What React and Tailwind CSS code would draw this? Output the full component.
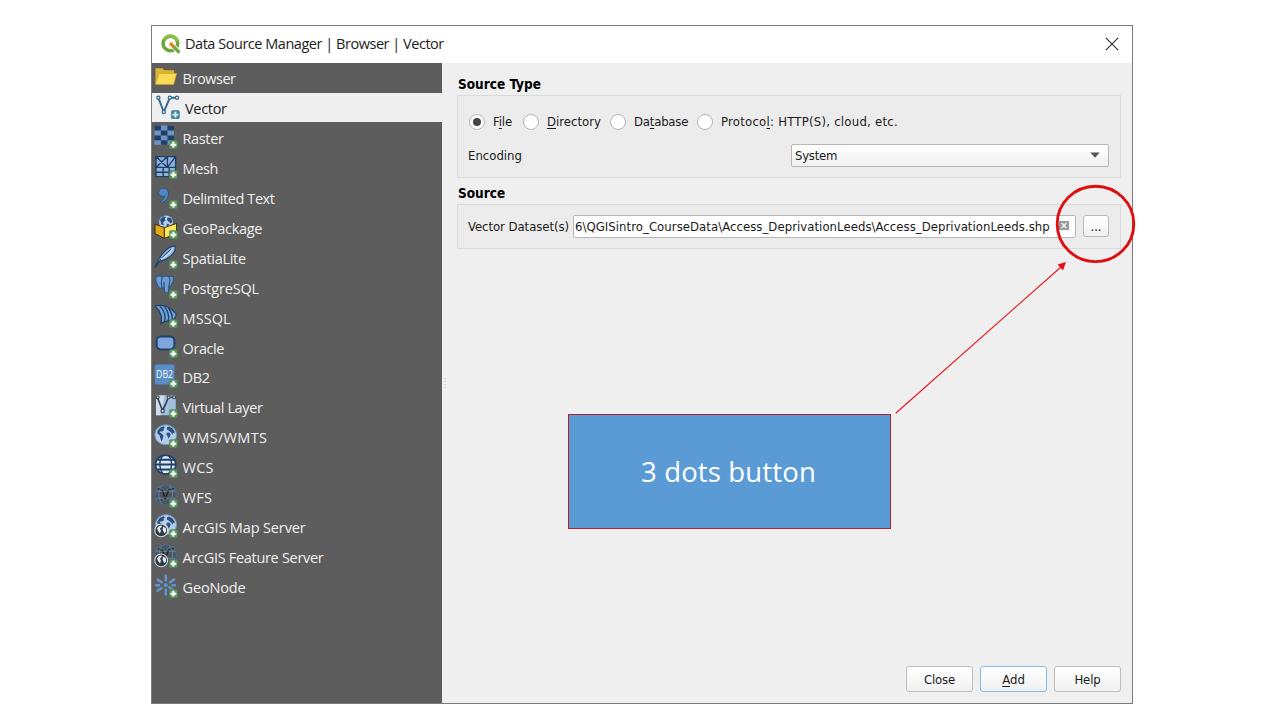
import React from "react";

const NAVY = "#1f3f66";

function Plus({ teal }) {
  return (
    <g>
      <rect x="15.4" y="15.6" width="8" height="8.2" rx="1.4" fill={teal ? "#3c8796" : "#5b9a5f"} stroke={teal ? "#2f6f86" : "#4b8550"} strokeWidth="0.5" />
      <path d="M19.4 16.8v5.8M16.5 19.7h5.8" stroke={teal ? "#cdeaf0" : "#ffffff"} strokeWidth="2.1" />
    </g>
  );
}

function Icon({ children, plus = true, teal = false }) {
  return (
    <svg viewBox="0 0 24 24" className="mb-[1.2px] h-6 w-6 shrink-0" fill="none">
      {children}
      {plus && <Plus teal={teal} />}
    </svg>
  );
}

function Continents({ color = NAVY }) {
  return (
    <path
      d="M3.4 7 6 3.8 9.6 2.2 11 3.4 9.4 4.8 10.2 6 8 7.6 6.4 7.2 6 8.6 8.4 10.2 9.6 12 8.6 15 7.6 17.6 6.4 14.6 5.4 11 3.4 9.4ZM12.8 3.4 15 2.4 18 4 20.4 7 20.8 9.6 19.2 8.8 18.4 10.8 17.2 8.4 16 7.8 14.8 6.6 13 5.8ZM12.8 8.8 15.2 8.6 16.8 10.6 15.8 12.6 14.6 14.8 13.6 12.2 12.4 10.8Z"
      fill={color}
    />
  );
}

function WireGlobe() {
  return (
    <g>
      <ellipse cx="11.7" cy="10.8" rx="10.8" ry="10" fill="#4f5459" stroke="#48678a" strokeWidth="1.3" />
      <path d="M2 7.400h19.400M2 14.300h19.400M8 1.400C3.800 6.600 3.800 14.800 8 20M15.400 1.400c4.200 5.200 4.200 13.400 0 18.600" stroke="#5c83aa" strokeWidth="1" />
      <path d="M4.600 4.800 8.300 6.400 11.200 14.600 15 5.400 19 4.600" stroke="#1e252c" strokeWidth="1.500" />
      <g fill="#242d36" stroke="#8aa3bb" strokeWidth="0.500">
        <circle cx="4.600" cy="4.800" r="1.500" />
        <circle cx="8.300" cy="6.400" r="1.500" />
        <circle cx="11.200" cy="14.600" r="1.600" />
        <circle cx="15" cy="5.400" r="1.500" />
        <circle cx="19" cy="4.600" r="1.500" />
      </g>
    </g>
  );
}

function ServerBadge() {
  return (
    <g>
      <circle cx="7.2" cy="16.4" r="6.4" fill="#2b3a49" stroke="#d5d9dc" strokeWidth="1.1" />
      <path d="M3 14.200 5.400 11.800 8 11.600 7.400 13.600 5.800 14.600 7 16.600 6 19.400 4.200 17.200ZM9.200 12.600 11.800 14 12.200 17 10.600 19.600 9.400 17.400 8.600 15.400Z" fill="#e3e8eb" />
    </g>
  );
}

const icons = {
  browser: (
    <Icon plus={false}>
      <path d="M1.400 3.200h7.200l1.600 2h9.800v13.600H1.400Z" fill="#dcb431" />
      <path d="M4.800 8.400h17.800l-3 11H1.600Z" fill="#fadb55" stroke="#cfa62c" strokeWidth="0.700" />
    </Icon>
  ),
  vector: (
    <Icon teal>
      <path d="M2.400 2.800 7.800 17 13.800 2.800H21" stroke="#33658f" strokeWidth="1.900" />
      <g fill="#e4edf4" stroke="#33658f" strokeWidth="1.200">
        <circle cx="2.400" cy="2.800" r="1.600" />
        <circle cx="7.800" cy="17" r="1.600" />
        <circle cx="13.800" cy="2.800" r="1.600" />
        <circle cx="21" cy="2.800" r="1.600" />
      </g>
    </Icon>
  ),
  raster: (
    <Icon>
      <path d="M.4.400H20v19.400H.400Z" fill="#6c93c4" />
      <path d="M.4.400h6.500v5H.400ZM13.400.400H20v5h-6.600ZM6.900 5.400h6.500v5.200H6.900ZM.4 10.600h6.500v4.700H.400ZM13.400 10.600H20v4.700h-6.600ZM6.900 15.300h6.500v4.500H6.900Z" fill="#223e62" />
    </Icon>
  ),
  mesh: (
    <Icon>
      <path d="M2 1.600h19.600v20H2Z" fill="#8fb2dc" />
      <path d="M2 1.600h19.600v20H2ZM2 12.400h19.600M2 17.200h13.200M13.400 1.600v10.800M9.200 12.400v9.200M15.200 12.400v9.200M2 1.600l11.400 10.800M13.400 1.600 2 12.400M13.400 12.400 21.600 1.600" stroke={NAVY} strokeWidth="1.400" />
    </Icon>
  ),
  comma: (
    <Icon>
      <path d="M8.800 3.200c3.400-.4 5.800 2 5.700 5.600-.1 4.400-3 8-7.300 9.200l-.6-1.700c2.500-1.200 3.900-3 4-5.100-3 .7-6-1-6-3.900 0-2.300 1.800-3.900 4.200-4.100Z" fill="#4f86bf" stroke="#29507d" strokeWidth="1" />
    </Icon>
  ),
  geopackage: (
    <Icon>
      <circle cx="12" cy="7.400" r="7.200" fill="#b9d0ea" stroke="#3b5f8c" strokeWidth="0.600" />
      <path d="M6 4.600 9.600 1.200 12 2 10.600 4 11.600 5.600 9 7.600 10 10.600 7.400 9.600ZM13.600 2.200 17 3.200 18.400 6.400 16.600 8.600 14.600 6.400 13 5ZM12.600 8.600 15.400 9.600 13 12Z" fill="#27507f" />
      <path d="M1 9.200 10.400 12.600V23.400L1 18.600Z" fill="#e3a91c" stroke="#3b2e07" strokeWidth="1" />
      <path d="M10.400 12.600 22.600 8.400V18.600L10.400 23.400Z" fill="#fbe65c" stroke="#3b2e07" strokeWidth="1" />
    </Icon>
  ),
  feather: (
    <Icon>
      <path d="M1 22.400C3 17 6 11 10.600 6.400 14.200 2.800 18.200.8 21.200 1.200 22 5 20.200 8 16.400 11.200 13 14 8.600 16 5.400 16.400Z" fill="#8db4e2" stroke={NAVY} strokeWidth="1.100" />
      <path d="M1 22.400C5 15.600 10 9.600 17 4.400" stroke={NAVY} strokeWidth="1" />
      <path d="M7 14.400C11 12.400 15 9.400 19 3.600" stroke="#c9dcf2" strokeWidth="1.500" />
    </Icon>
  ),
  elephant: (
    <Icon>
      <path d="M2 2.200C4 .6 7 .8 9 1.600c2.400-1 4.600-.8 6 0 2.400-.8 4.400-.2 4.600 1.800.2 3-1.600 6.200-3 7.800-.6.600-1.600.2-1.800-.4l-.2 5.600c-.2 2-3.600 2.200-4 .2l-.4-4.200c-1 1-2 .6-2.600 0-.6 1.400-2 1.400-2.800 0C3 9.400 1 4.600 2 2.200Z" fill="#6f9bd1" stroke="#2a5585" strokeWidth="1.100" />
      <path d="M8.400 2C7 4.600 7.400 8.600 7.600 12M15 1.800c1.600 2 1 5.600-.2 9M10.200 12.400c-.4-2 .2-3.600-.4-5.400" stroke="#2a5585" strokeWidth="1.200" />
    </Icon>
  ),
  mssql: (
    <Icon>
      <path d="M1.200 2C6 .6 14 1 22 9.600c.6 2-1 4.600-3 6.400-4 .4-8.400 1.200-12.400 3.400C9 14.600 6.600 7 1.200 2Z" fill="#6f9fd6" stroke={NAVY} strokeWidth="1.100" />
      <path d="M5.600 1.600C10.600 7 12 13 10.400 18M10 2.200c4 4.800 5.400 9.800 4.200 14.400M14.400 4c3 3.800 4.200 7.800 3.600 11.800" stroke={NAVY} strokeWidth="1.300" />
    </Icon>
  ),
  oracle: (
    <Icon>
      <rect x="2.600" y="2.400" width="17.800" height="13" rx="4.400" fill="#7fa6dc" stroke={NAVY} strokeWidth="2" />
    </Icon>
  ),
  db2: (
    <Icon>
      <rect x="0.800" y="0.400" width="19.600" height="20" rx="1.800" fill="#5b8ec4" stroke="#477bb0" strokeWidth="0.600" />
      <text x="10.600" y="13.800" textAnchor="middle" fontFamily="Open Sans, sans-serif" fontSize="11.500" fontWeight="500" textLength="17" lengthAdjust="spacingAndGlyphs" fill="#f2f7fc">DB2</text>
    </Icon>
  ),
  virtual: (
    <Icon>
      <path d="M2 1.400h19.800v19.800H2Z" fill="#a3bfdf" />
      <path d="M2 1.400h8.600l-4 19.800H2Z" fill="#cfdeee" />
      <path d="M3.400 3.200 8.600 16.800 14.600 3.200H20.600" stroke="#353f49" strokeWidth="1.600" />
      <g fill="#cddbe9" stroke="#353f49" strokeWidth="1.100">
        <circle cx="3.600" cy="3.200" r="1.500" />
        <circle cx="8.600" cy="17" r="1.700" />
        <circle cx="14.600" cy="3.200" r="1.500" />
        <circle cx="20.200" cy="3.200" r="1.500" />
      </g>
    </Icon>
  ),
  wms: (
    <Icon>
      <ellipse cx="11.700" cy="10.800" rx="10.900" ry="10" fill="#b4cdea" stroke="#6d93bf" strokeWidth="1" />
      <Continents color="#2a5280" />
    </Icon>
  ),
  wcs: (
    <Icon>
      <ellipse cx="11.700" cy="10.600" rx="10.200" ry="9.500" fill="#dbe7f3" stroke={NAVY} strokeWidth="1.600" />
      <path d="M3.400 5.800h16.600M1.600 10.600h20.200M3.400 15.400h16.600" stroke={NAVY} strokeWidth="2" />
      <path d="M8.600 1.400C5 7 5 14 8.600 19.600M14.800 1.400c3.600 5.600 3.600 12.600 0 18.200" stroke={NAVY} strokeWidth="1.400" />
    </Icon>
  ),
  wfs: (
    <Icon>
      <WireGlobe />
    </Icon>
  ),
  arcmap: (
    <Icon>
      <ellipse cx="12" cy="10.600" rx="10.600" ry="10" fill="#b4cdea" stroke="#6d93bf" strokeWidth="1" />
      <Continents color="#2a5280" />
      <ServerBadge />
    </Icon>
  ),
  arcfeature: (
    <Icon>
      <WireGlobe />
      <ServerBadge />
    </Icon>
  ),
  geonode: (
    <Icon>
      <path d="M11.800 1.800v4.800M11.800 15.600v4.800M3.600 5.600l4 2.600M20 5.600l-4 2.600M3.600 16.600l4-2.600M2.200 11.200h3M18.600 11.200h2.400M15.400 13.400l2.400 1.600" stroke="#5f96cf" strokeWidth="2.500" strokeLinecap="round" />
      <circle cx="11.800" cy="11.200" r="1.900" fill="#5f96cf" />
    </Icon>
  ),
};

const sources = [
  { label: "Browser", icon: "browser", track: "tracking-[-0.45px]" },
  { label: "Vector", icon: "vector", track: "tracking-[-0.3px]", selected: true },
  { label: "Raster", icon: "raster", track: "tracking-[-0.35px]" },
  { label: "Mesh", icon: "mesh", track: "tracking-[-0.4px]" },
  { label: "Delimited Text", icon: "comma", track: "tracking-[-0.42px]" },
  { label: "GeoPackage", icon: "geopackage", track: "tracking-[-0.33px]" },
  { label: "SpatiaLite", icon: "feather", track: "tracking-[-0.3px]" },
  { label: "PostgreSQL", icon: "elephant", track: "tracking-[-0.18px]" },
  { label: "MSSQL", icon: "mssql", track: "tracking-[0.1px]" },
  { label: "Oracle", icon: "oracle", track: "tracking-[-0.4px]" },
  { label: "DB2", icon: "db2", track: "tracking-[-0.3px]" },
  { label: "Virtual Layer", icon: "virtual", track: "tracking-[-0.36px]" },
  { label: "WMS/WMTS", icon: "wms", track: "tracking-[0.35px]" },
  { label: "WCS", icon: "wcs", track: "tracking-[0.3px]" },
  { label: "WFS", icon: "wfs", track: "tracking-[0.3px]" },
  { label: "ArcGIS Map Server", icon: "arcmap", track: "tracking-[-0.14px]" },
  { label: "ArcGIS Feature Server", icon: "arcfeature", track: "tracking-[-0.3px]" },
  { label: "GeoNode", icon: "geonode", track: "tracking-[-0.15px]" },
];

function TitleBar() {
  return (
    <header className="flex h-[36.6px] shrink-0 items-center bg-white pr-[13px] pl-[9px]">
      <svg viewBox="0 0 20 20" className="mb-[1.6px] h-5 w-5 shrink-0" fill="none">
        <circle cx="9.400" cy="9.400" r="7.300" stroke="#6da63a" strokeWidth="3.600" />
        <path d="M3 5.800A7.300 7.300 0 0 1 16.400 7.400" stroke="#8fbf45" strokeWidth="2.600" />
        <path d="m9.600 9.600 8.600 8.600" stroke="#ffffff" strokeWidth="5" />
        <path d="m11.600 11.600 6.800 7" stroke="#6da63a" strokeWidth="3.500" />
        <path d="M8.600 8.400h4l-1.200 1.200 2.600 2.600-1.800 1.800-2.600-2.600-1 1.200Z" fill="#ee7913" />
      </svg>
      <h1 className="ml-[4px] grow font-['Open_Sans',sans-serif] text-[14.5px] whitespace-nowrap tracking-[-0.47px] text-[#1c1c1c]">
        Data Source Manager | Browser | Vector
      </h1>
      <svg viewBox="0 0 14 14" className="mb-[1.6px] h-3.5 w-3.5" fill="none" stroke="#333333" strokeWidth="1.200">
        <path d="m.8.800 12.400 12.400M13.200.800.800 13.200" />
      </svg>
    </header>
  );
}

function Sidebar() {
  return (
    <nav className="w-[290px] shrink-0 bg-[#5d5d5d] font-['Open_Sans',sans-serif] text-[14.5px]">
      {sources.map((s) => (
        <div
          key={s.label}
          className={
            s.selected
              ? "flex h-[29.94px] items-center gap-[5px] bg-[#efefef] pl-[4px] text-[#222222]"
              : "flex h-[29.94px] items-center gap-[4.5px] pl-[2px] text-[#f0f0f0]"
          }
        >
          {icons[s.icon]}
          <span className={"pt-[2.8px] whitespace-nowrap " + s.track}>{s.label}</span>
        </div>
      ))}
    </nav>
  );
}

function Radio({ checked, children }) {
  return (
    <label className="flex items-center whitespace-nowrap">
      <span className="mr-[8px] flex h-4 w-4 items-center justify-center rounded-full border border-[#b4b4b4] bg-white">
        {checked && <span className="h-2 w-2 rounded-full bg-[#444444]" />}
      </span>
      {children}
    </label>
  );
}

function PushButton({ primary, children }) {
  return (
    <button
      className={
        primary
          ? "h-[26px] w-[67px] rounded-[3px] border border-[#83bbec] bg-linear-to-b from-white to-[#f1f1f1] pt-[2px]"
          : "h-[26px] w-[67px] rounded-[3px] border border-[#bdbdbd] bg-linear-to-b from-white to-[#f1f1f1] pt-[2px] tracking-[-0.15px]"
      }
    >
      {children}
    </button>
  );
}

export default function App() {
  return (
    <main className="relative h-[720px] w-[1280px] overflow-hidden bg-white pt-[25px] pl-[151px]">
      <section className="flex h-[679px] w-[982px] flex-col border border-[#7b7b7b] bg-[#efefef]">
        <TitleBar />
        <div className="flex min-h-0 grow">
          <Sidebar />
          <div className="flex w-[4px] shrink-0 flex-col items-center justify-center gap-[2px] pl-[1px]">
            <i className="h-px w-[2px] bg-[#dadada]" />
            <i className="h-px w-[2px] bg-[#dadada]" />
            <i className="h-px w-[2px] bg-[#dadada]" />
            <i className="h-px w-[2px] bg-[#dadada]" />
          </div>
          <div className="flex grow flex-col pr-[11px] pl-[11px] font-['DejaVu_Sans_Condensed',sans-serif] text-[13px] text-[#1a1a1a]">
            <h2 className="mt-[12.4px] h-[20px] pl-[1px] text-[13.5px] leading-[18px] font-bold text-black">Source Type</h2>
            <div className="h-[83px] w-[664px] border border-[#dadada] bg-[#ececec] pr-[11px] pl-[10px]">
              <div className="mt-[16px] flex h-[20px] items-center">
                <div className="-mr-[7px] w-[62px] shrink-0 pl-[1px]">
                  <Radio checked><span className="tracking-[-0.1px]">F<u className="underline-offset-2">i</u>le</span></Radio>
                </div>
                <div className="w-[87px] shrink-0">
                  <Radio><span><u className="underline-offset-2">D</u>irectory</span></Radio>
                </div>
                <div className="w-[87px] shrink-0">
                  <Radio><span className="tracking-[-0.2px]">Da<u className="underline-offset-2">t</u>abase</span></Radio>
                </div>
                <Radio><span className="tracking-[0.24px]">Protoco<u className="underline-offset-2">l</u>: HTTP(S), cloud, etc.</span></Radio>
              </div>
              <div className="mt-[12px] flex h-[23px] items-center justify-between">
                <span>Encoding</span>
                <div className="flex h-[23px] w-[318px] items-center justify-between rounded-[2px] border border-[#b5b5b5] bg-linear-to-b from-white to-[#f0f0f0] pr-[8px] pl-[3px]">
                  <span className="tracking-[-0.25px]">System</span>
                  <svg viewBox="0 0 10 6" className="h-[6px] w-[10px]">
                    <path d="M.3.500h9.400L5 5.700Z" fill="#555555" />
                  </svg>
                </div>
              </div>
            </div>
            <h2 className="mt-[6px] h-[20px] pl-[1px] text-[13.5px] leading-[18px] font-bold text-black">Source</h2>
            <div className="flex h-[45px] w-[664px] items-center border border-[#dadada] bg-[#ececec] pl-[10px]">
              <span className="w-[105px] shrink-0 whitespace-nowrap tracking-[-0.05px]">Vector Dataset(s)</span>
              <div className="flex h-[23px] w-[503px] shrink-0 items-center justify-between rounded-[2px] border border-[#b5b5b5] bg-white pr-[6px] pl-[1px]">
                <span className="whitespace-nowrap tracking-[0.05px]">6\QGISintro_CourseData\Access_DeprivationLeeds\Access_DeprivationLeeds.shp</span>
                <svg viewBox="0 0 10 9" className="mb-[2px] h-[9px] w-[10px] shrink-0">
                  <path d="M0 0h10v9H0Z" fill="#9b9b9b" />
                  <path d="m2.600 2 4.800 5M7.400 2 2.600 7" stroke="#f4f4f4" strokeWidth="1.300" />
                </svg>
              </div>
              <button className="mb-[1px] ml-[7px] flex h-[22px] w-[26px] items-center justify-center rounded-[3px] border border-[#b9b9b9] bg-linear-to-b from-white to-[#f1f1f1] pt-[1px] text-black">...</button>
            </div>
            <div className="mt-auto mb-[11px] flex w-[664px] justify-end gap-[7px]">
              <PushButton>Close</PushButton>
              <PushButton primary><u className="underline-offset-2">A</u>dd</PushButton>
              <PushButton>Help</PushButton>
            </div>
          </div>
        </div>
      </section>

      <div className="absolute top-[414px] left-[568px] flex h-[115px] w-[323px] items-center justify-center border border-[#b3202c] bg-[#5b9bd5] pr-[2px] font-['Open_Sans',sans-serif] text-[27.5px] tracking-[0.15px] text-white">
        3 dots button
      </div>
      <svg viewBox="0 0 260 240" className="absolute top-[180px] left-[885px] h-[240px] w-[260px]" fill="none">
        <ellipse cx="210.500" cy="43.900" rx="38.300" ry="37.700" stroke="#dd0f12" strokeWidth="2.900" />
        <path d="M10.700 233.200 176 87" stroke="#e81c20" strokeWidth="1.200" />
        <path d="M181 82 172.600 84.600 178 90.600Z" fill="#e80d10" />
      </svg>
    </main>
  );
}
